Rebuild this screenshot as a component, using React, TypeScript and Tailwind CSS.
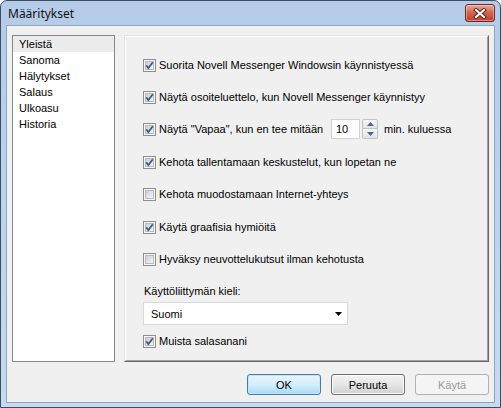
import React from "react";

function CheckBox({ checked }: { checked: boolean }) {
  return (
    <svg width="13" height="13" viewBox="0 0 13 13" className="shrink-0">
      <defs>
        <linearGradient id="cbfill" x1="0" y1="0" x2="1" y2="1">
          <stop offset="0" stopColor="#c9ccd1" />
          <stop offset="1" stopColor="#f8f8f8" />
        </linearGradient>
      </defs>
      <rect x="0.5" y="0.5" width="12" height="12" fill="#f6f6f6" stroke="#8e8f8f" />
      <rect x="2.5" y="2.5" width="8" height="8" fill="url(#cbfill)" stroke="#b8bbc0" />
      {checked && (
        <path d="M3.2 6.4 L5.4 9 L9.8 3.2" fill="none" stroke="#42598a" strokeWidth="1.8" />
      )}
    </svg>
  );
}

function Option({ checked, children, className = "" }: { checked: boolean; children: React.ReactNode; className?: string }) {
  return (
    <div className={`flex items-center h-[18px] ${className}`}>
      <CheckBox checked={checked} />
      <span className="ml-[3px] whitespace-nowrap">{children}</span>
    </div>
  );
}

function CloseButton() {
  return (
    <div className="mt-[3px] w-[30px] h-[18px] rounded-[3px] border border-[#6b2a22] bg-gradient-to-b from-[#e9a99c] via-[#d0614f] to-[#c2432f] flex items-center justify-center shadow-[inset_0_0_0_1px_rgba(255,255,255,0.35)]">
      <svg width="14" height="11" viewBox="0 0 14 11">
        <path d="M3 2 L11 9 M11 2 L3 9" stroke="#5a2018" strokeWidth="4" strokeLinecap="square" />
        <path d="M3 2 L11 9 M11 2 L3 9" stroke="#ffffff" strokeWidth="2.2" strokeLinecap="square" />
      </svg>
    </div>
  );
}

const sections = ["Yleistä", "Sanoma", "Hälytykset", "Salaus", "Ulkoasu", "Historia"];

export default function App() {
  return (
    <div className="w-[501px] h-[408px] bg-white font-['Liberation_Sans',Arial,sans-serif] text-[11px] leading-[14px] text-black">
      <div className="w-full h-full flex flex-col rounded-t-[7px] border border-[#3e4e62] bg-gradient-to-b from-[#b4cce8] to-[#c7daef] px-[5px] pb-[4px]">
        {/* Title bar */}
        <div className="h-[24px] flex justify-between items-start">
          <span className="mt-[5px] ml-[2px] text-[12px] leading-[15px] text-[#111] font-['Noto_Sans',sans-serif]">Määritykset</span>
          <CloseButton />
        </div>

        {/* Client area */}
        <div className="flex-1 flex flex-col border border-[#8ea5bf] bg-[#f0f0f0] pt-[9px] px-[5px]">
          <div className="flex gap-[9px] h-[327px]">
            {/* Section list */}
            <div className="w-[103px] border border-[#828790] bg-white flex flex-col">
              {sections.map((s, i) => (
                <div
                  key={s}
                  className={`h-[16px] pl-[6px] flex items-center ${i === 0 ? "bg-[#ececec]" : ""}`}
                >
                  {s}
                </div>
              ))}
            </div>

            {/* Settings panel */}
            <div className="flex-1 border border-t-[#e3e3e3] border-l-[#e3e3e3] border-r-[#696969] border-b-[#696969]">
              <div className="h-full border border-t-white border-l-white border-r-[#a0a0a0] border-b-[#a0a0a0] pl-[17px] pt-[19px] flex flex-col">
                <Option checked>Suorita Novell Messenger Windowsin käynnistyessä</Option>
                <Option checked className="mt-[14px]">Näytä osoiteluettelo, kun Novell Messenger käynnistyy</Option>

                <div className="mt-[14px] flex items-center h-[18px]">
                  <CheckBox checked />
                  <span className="ml-[3px] w-[172px] whitespace-nowrap">Näytä "Vapaa", kun en tee mitään</span>
                  <div className="w-[29px] h-[20px] border border-[#cfd2d6] bg-white pl-[4px] flex items-center">10</div>
                  <div className="ml-[2px] w-[16px] h-[20px] flex flex-col">
                    <div className="h-[10px] rounded-t-[2px] border border-[#c3c3c3] bg-gradient-to-b from-[#f7f7f7] to-[#e2e2e2] flex items-center justify-center">
                      <svg width="7" height="4" viewBox="0 0 7 4"><path d="M0 4 L3.5 0 L7 4 Z" fill="#4f6488" /></svg>
                    </div>
                    <div className="h-[10px] rounded-b-[2px] border border-t-0 border-[#c3c3c3] bg-gradient-to-b from-[#f7f7f7] to-[#e2e2e2] flex items-center justify-center">
                      <svg width="7" height="4" viewBox="0 0 7 4"><path d="M0 0 L7 0 L3.5 4 Z" fill="#4f6488" /></svg>
                    </div>
                  </div>
                  <span className="ml-[6px] whitespace-nowrap">min. kuluessa</span>
                </div>

                <Option checked className="mt-[15px]">Kehota tallentamaan keskustelut, kun lopetan ne</Option>
                <Option checked={false} className="mt-[14px]">Kehota muodostamaan Internet-yhteys</Option>
                <Option checked className="mt-[15px]">Käytä graafisia hymiöitä</Option>
                <Option checked={false} className="mt-[14px]">Hyväksy neuvottelukutsut ilman kehotusta</Option>

                <div className="mt-[16px] h-[14px] pl-[1px]">Käyttöliittymän kieli:</div>
                <div className="mt-[4px] w-[205px] h-[23px] border border-[#dadada] bg-white flex items-center justify-between pl-[7px] pr-[5px]">
                  <span>Suomi</span>
                  <svg width="7" height="4" viewBox="0 0 7 4"><path d="M0 0 L7 0 L3.5 4 Z" fill="#000" /></svg>
                </div>
                <Option checked className="mt-[7px]">Muista salasanani</Option>
              </div>
            </div>
          </div>

          {/* Dialog buttons */}
          <div className="mt-[12px] flex justify-end gap-[10px]">
            <div className="w-[74px] h-[21px] rounded-[3px] border border-[#3c7fb1] bg-gradient-to-b from-[#eaf6fd] via-[#d3eefc] to-[#a9daf6] flex items-center justify-center shadow-[inset_0_0_0_1px_#c4e5f6]">
              OK
            </div>
            <div className="w-[74px] h-[21px] rounded-[3px] border border-[#707070] bg-gradient-to-b from-[#f2f2f2] via-[#e6e6e6] to-[#d0d0d0] flex items-center justify-center shadow-[inset_0_0_0_1px_#fbfbfb]">
              Peruuta
            </div>
            <div className="w-[74px] h-[21px] rounded-[3px] border border-[#adb2b5] bg-[#f4f4f4] text-[#9a9a9a] flex items-center justify-center">
              Käytä
            </div>
          </div>
        </div>
      </div>
    </div>
  );
}
